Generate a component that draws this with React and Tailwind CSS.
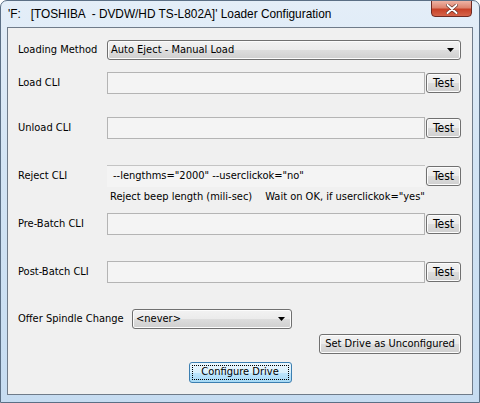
import React from 'react'

const FONT = { fontFamily: '"DejaVu Sans Condensed", "Liberation Sans", Arial, sans-serif' }
const TITLE_FONT = { fontFamily: '"Liberation Sans", Arial, sans-serif' }

function VistaButton({ children, className = '' }) {
  return (
    <div
      className={`flex items-center justify-center h-[20px] rounded-[3px] border border-[#707070] bg-[linear-gradient(#f2f2f2_0%,#ebebeb_50%,#dddddd_51%,#cfcfcf_100%)] shadow-[inset_0_0_0_1px_#fcfcfc] text-[11px] text-black ${className}`}
    >
      {children}
    </div>
  )
}

function Combo({ value, className = '' }) {
  return (
    <div
      className={`flex items-center h-[20px] rounded-[3px] border border-[#707070] bg-[linear-gradient(#f2f2f2_0%,#ebebeb_50%,#dddddd_51%,#cfcfcf_100%)] shadow-[inset_0_0_0_1px_#fcfcfc] pl-[3px] pr-[6px] text-[11px] ${className}`}
    >
      <span className="flex-1">{value}</span>
      <svg width="7" height="4" viewBox="0 0 7 4">
        <path d="M0 0h7L3.5 4z" fill="#000" />
      </svg>
    </div>
  )
}

function CliRow({ label, value, open = false }) {
  return (
    <div className="flex items-center">
      <div className="w-[89px] text-[11px]">{label}</div>
      <div
        className={`w-[318px] h-[22px] bg-[#f4f4f4] flex items-center pl-[6px] text-[11px] ${
          open ? 'border-t border-[#c4c4c4]' : 'border border-[#b4b4b4]'
        }`}
      >
        {value}
      </div>
      <VistaButton className="ml-[1px] w-[35px] text-[12px]">Test</VistaButton>
    </div>
  )
}

export default function App() {
  return (
    <div
      style={FONT}
      className="w-[480px] h-[403px] flex flex-col rounded-t-[7px] border border-[#5b6f85] bg-[linear-gradient(180deg,#e4eef8_0%,#d3e4f4_40%,#c6dcf1_100%)] text-black overflow-hidden"
    >
      <div className="flex h-[26px] shrink-0">
        <div style={TITLE_FONT} className="pl-[7px] pt-[5px] text-[11.85px] text-black whitespace-pre">
          {"'F:   [TOSHIBA  - DVDW/HD TS-L802A]' Loader Configuration"}
        </div>
        <div className="ml-auto mr-[7px] w-[41px] h-[17px] -mt-[1px] rounded-b-[4px] border border-[#6e2a22] bg-[linear-gradient(#eeb3a4_0%,#dd846f_45%,#c84127_55%,#d5644a_100%)] flex items-center justify-center">
          <svg width="12" height="10" viewBox="0 0 12 10">
            <path d="M1.5 1l9 8M10.5 1l-9 8" stroke="#5a2a22" strokeWidth="3.2" strokeLinecap="round" />
            <path d="M1.5 1l9 8M10.5 1l-9 8" stroke="#ffffff" strokeWidth="2" strokeLinecap="round" />
          </svg>
        </div>
      </div>

      <div className="mx-[6px] mb-[7px] flex-1 border border-[#6f7b89] bg-[#f0f0f0] pl-[10px] flex flex-col">
        <div className="flex items-center mt-[12px]">
          <div className="w-[89px] text-[11px]">Loading Method</div>
          <Combo value="Auto Eject - Manual Load" className="w-[354px]" />
        </div>

        <div className="mt-[12px]">
          <CliRow label="Load CLI" value="" />
        </div>
        <div className="mt-[23px]">
          <CliRow label="Unload CLI" value="" />
        </div>
        <div className="mt-[26px]">
          <CliRow label="Reject CLI" value={'--lengthms="2000" --userclickok="no"'} open />
        </div>
        <div className="flex text-[11px] mt-[3px] h-[14px] leading-[14px]">
          <span className="ml-[92px]">Reject beep length (mili-sec)</span>
          <span className="ml-[13px]">Wait on OK, if userclickok="yes"</span>
        </div>
        <div className="mt-[9px]">
          <CliRow label="Pre-Batch CLI" value="" />
        </div>
        <div className="mt-[26px]">
          <CliRow label="Post-Batch CLI" value="" />
        </div>

        <div className="flex items-center mt-[26px]">
          <div className="w-[114px] text-[11px]">Offer Spindle Change</div>
          <Combo value="<never>" className="w-[160px]" />
        </div>

        <div className="flex justify-end pr-[11px] mt-[5px]">
          <VistaButton className="w-[142px]">Set Drive as Unconfigured</VistaButton>
        </div>

        <div className="flex justify-center mt-[8px] -ml-[10px]">
          <div className="w-[103px] h-[21px] rounded-[3px] border border-[#3c7fb1] bg-[linear-gradient(#eaf6fd_0%,#d9f0fc_50%,#bee6fd_51%,#a7d9f5_100%)] p-[2px]">
            <div className="h-full border border-dotted border-[#000] flex items-center justify-center text-[11px]">
              Configure Drive
            </div>
          </div>
        </div>
      </div>
    </div>
  )
}
